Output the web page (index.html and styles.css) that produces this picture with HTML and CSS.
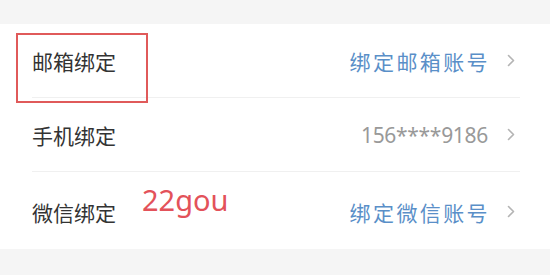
FILE: index.html
```html
<!DOCTYPE html>
<html lang="zh-CN">
<head>
  <meta charset="UTF-8">
  <meta name="viewport" content="width=device-width, initial-scale=1.0">
  <title>账号绑定</title>
  <link rel="stylesheet" href="styles.css">
</head>
<body>
  <div class="page">
    <div class="list">
      <div class="row">
        <span class="label">邮箱绑定</span>
        <span class="value link">绑定邮箱账号</span>
        <svg class="arrow" width="8" height="13" viewBox="0 0 8 13"><path d="M1.5 1.5 L6.5 6.5 L1.5 11.5" fill="none" stroke="#b4b4b4" stroke-width="1.6" stroke-linecap="round" stroke-linejoin="round"/></svg>
      </div>
      <div class="row">
        <span class="label">手机绑定</span>
        <span class="value phone">156****9186</span>
        <svg class="arrow" width="8" height="13" viewBox="0 0 8 13"><path d="M1.5 1.5 L6.5 6.5 L1.5 11.5" fill="none" stroke="#b4b4b4" stroke-width="1.6" stroke-linecap="round" stroke-linejoin="round"/></svg>
      </div>
      <div class="row last">
        <span class="label">微信绑定</span>
        <span class="value link">绑定微信账号</span>
        <svg class="arrow" width="8" height="13" viewBox="0 0 8 13"><path d="M1.5 1.5 L6.5 6.5 L1.5 11.5" fill="none" stroke="#b4b4b4" stroke-width="1.6" stroke-linecap="round" stroke-linejoin="round"/></svg>
      </div>

      <!-- annotations drawn over the list -->
      <div class="mark-box"></div>
      <div class="mark-text">22gou</div>
    </div>
  </div>
</body>
</html>
```

FILE: styles.css
```css
body {
  margin: 0;
  background-color: #f5f5f5;
  font-family: "Noto Sans", "Noto Sans CJK SC", sans-serif;
  color: #333;
}

.page {
  padding-top: 24px;
}

.list {
  position: relative;
  background-color: #ffffff;
  height: 225px;
  display: flex;
  flex-direction: column;
}

.row {
  display: flex;
  align-items: center;
  height: 74px;
  margin-left: 32px;
  margin-right: 30px;
  border-bottom: 1px solid #f0f0f0;
  box-sizing: border-box;
}
.row.last {
  flex: 1;
  border-bottom: none;
  padding-top: 2px;
}

.label {
  font-size: 21px;
  color: #333;
}

.value {
  margin-left: auto;
  font-size: 21px;
}
.value.link {
  color: #5a8fc8;
  letter-spacing: 2.4px;
  margin-right: -2px;
}
.value.phone {
  color: #999;
  font-size: 21px;
  letter-spacing: -0.3px;
}

.arrow {
  margin-left: 19px;
  margin-right: 5px;
}

.mark-box {
  position: absolute;
  left: 16px;
  top: 9px;
  width: 128px;
  height: 66px;
  border: 2px solid #e05a5a;
}

.mark-text {
  position: absolute;
  left: 142px;
  top: 156px;
  font-size: 29px;
  color: #e3525a;
  font-family: "Noto Sans", sans-serif;
}
```
